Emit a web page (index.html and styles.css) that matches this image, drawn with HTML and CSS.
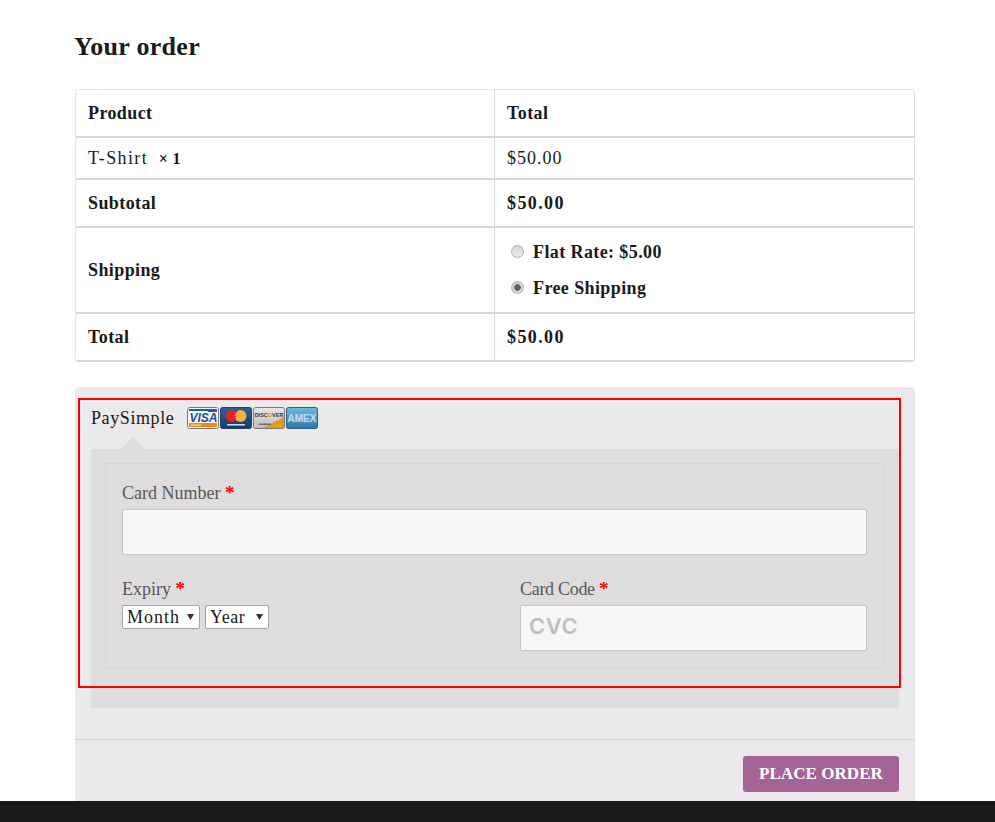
FILE: index.html
```html
<!DOCTYPE html>
<html lang="en">
<head>
<meta charset="utf-8">
<title>Your order</title>
<link rel="stylesheet" href="styles.css">
</head>
<body>
<div class="page">
  <main class="content">
    <h3 class="title">Your order</h3>
    <table class="order">
      <colgroup><col class="col-left"><col></colgroup>
      <thead>
        <tr class="row-head"><th>Product</th><th>Total</th></tr>
      </thead>
      <tbody>
        <tr class="row-item"><td><span class="item-name">T-Shirt</span> <strong class="qty">× 1</strong></td><td>$50.00</td></tr>
        <tr class="row-total"><th>Subtotal</th><th class="money">$50.00</th></tr>
        <tr class="row-ship">
          <th>Shipping</th>
          <th>
            <label class="ship-opt"><input type="radio" name="ship" class="radio">Flat Rate: $5.00</label>
            <label class="ship-opt"><input type="radio" name="ship" class="radio" checked>Free Shipping</label>
          </th>
        </tr>
        <tr class="row-total"><th>Total</th><th class="money">$50.00</th></tr>
      </tbody>
    </table>

    <section class="payment">
      <div class="highlight"></div>
      <div class="method">
        <span class="method-name">PaySimple</span>
        <span class="cards">
          <svg class="card" viewBox="0 0 32 22" width="32" height="22">
            <rect x=".5" y=".5" width="31" height="21" rx="2" fill="#f6f6f6" stroke="#77797d"/>
            <path d="M2 2H30V5H21V4H2Z" fill="#1c5fae"/>
            <text x="16.500" y="15" text-anchor="middle" class="visa">VISA</text>
            <rect x="2" y="16" width="28" height="4" fill="#ec8a14"/>
            <rect x="4" y="17.500" width="10" height="1.200" fill="#fbe3c0"/>
          </svg>
          <svg class="card" viewBox="0 0 32 22" width="32" height="22">
            <defs><linearGradient id="mc" x1="0" y1="0" x2="0" y2="1"><stop offset="0" stop-color="#2a6199"/><stop offset="1" stop-color="#153c69"/></linearGradient></defs>
            <rect x=".5" y=".5" width="31" height="21" rx="2" fill="url(#mc)" stroke="#28405f"/>
            <circle cx="11.500" cy="9" r="6" fill="#e2242b"/>
            <circle cx="20.500" cy="9" r="6" fill="#f2b33c"/>
            <path d="M13 5.500h4M13 7.500h3M13 9.500h3M13 11.500h3" stroke="#e2242b" stroke-width="1"/>
            <rect x="7" y="17" width="18" height="1.500" fill="#d4deea"/>
          </svg>
          <svg class="card" viewBox="0 0 32 22" width="32" height="22">
            <defs><linearGradient id="dc" x1="0" y1="0" x2="0" y2="1"><stop offset="0" stop-color="#e6e6e6"/><stop offset="1" stop-color="#bdbdbd"/></linearGradient></defs>
            <rect x=".5" y=".5" width="31" height="21" rx="2" fill="url(#dc)" stroke="#77797d"/>
            <path d="M10 21 L31 21 L31 10Z" fill="#e29d14"/>
            <text x="16" y="10" text-anchor="middle" class="disc">DISC<tspan class="disc-o">O</tspan>VER</text>
            <rect x="6" y="16.500" width="12" height="1.500" fill="#6f6f72"/>
          </svg>
          <svg class="card" viewBox="0 0 32 22" width="32" height="22">
            <defs><linearGradient id="ax" x1="0" y1="0" x2="0" y2="1"><stop offset="0" stop-color="#6bb8e2"/><stop offset="1" stop-color="#2f76a6"/></linearGradient></defs>
            <rect x=".5" y=".5" width="31" height="21" rx="2" fill="url(#ax)" stroke="#2b5f80"/>
            <text x="16" y="14.500" text-anchor="middle" class="amex">AMEX</text>
          </svg>
        </span>
      </div>
      <div class="panel">
        <fieldset class="fields">
          <div class="field">
            <label class="label">Card Number <span class="req">*</span></label>
            <input class="text-input" type="text">
          </div>
          <div class="field-row">
            <div class="col">
              <label class="label">Expiry <span class="req">*</span></label>
              <div class="selects">
                <select class="sel sel-month"><option>Month</option></select>
                <select class="sel sel-year"><option>Year</option></select>
              </div>
            </div>
            <div class="col col-code">
              <label class="label">Card Code <span class="req">*</span></label>
              <input class="text-input cvc" type="text" placeholder="CVC">
            </div>
          </div>
        </fieldset>
      </div>
      <div class="actions">
        <button class="place" type="button">Place order</button>
      </div>
    </section>
  </main>
  <footer class="bar"></footer>
</div>
</body>
</html>
```
FILE: styles.css
```css
* { box-sizing: border-box; }
html, body { margin: 0; height: 100%; }
body {
  background: #fff;
  color: #1a1a1a;
  font-family: "Liberation Serif", "Times New Roman", serif;
  font-size: 18px;
}
.page { height: 100vh; display: flex; flex-direction: column; overflow: hidden; }
.content { flex: 1; min-height: 0; overflow: hidden; padding: 0 80px 0 74px; }
.title { margin: 31px 0 0; font-size: 26px; line-height: 32px; font-weight: 700; letter-spacing: .3px; }

.order {
  width: 840px;
  margin: 26px 0 0 1px;
  table-layout: fixed;
  border-collapse: separate;
  border-spacing: 0;
  border: 1px solid #e6e6e6;
  border-right-color: #dcdcdc;
  border-bottom: 2px solid #d8d8d8;
  border-radius: 4px;
}
.col-left { width: 418px; }
.order th, .order td {
  padding: 0 12px;
  text-align: left;
  font-weight: 700;
  letter-spacing: .4px;
  border-left: 1px solid #d6d6d6;
  border-top: 2px solid #d8d8d8;
}
.order td { font-weight: 400; letter-spacing: 1px; }
.order th:first-child, .order td:first-child { border-left: 0; }
.order tr:first-child th { border-top: 0; }
.order .money { letter-spacing: 1.4px; }
.row-head { height: 46px; }
.row-item { height: 42px; }
.row-total { height: 48px; }
.row-ship { height: 86px; }
.item-name { letter-spacing: 1.4px; }
.qty { margin-left: 5px; letter-spacing: .4px; font-size: 16px; }

.ship-opt { display: flex; align-items: center; height: 36px; }
.radio {
  appearance: none;
  width: 13px;
  height: 13px;
  margin: 0 9px 2px 4px;
  border: 1px solid #aeaeae;
  border-radius: 50%;
  background: linear-gradient(#d4d4d4, #ececec);
}
.radio:checked {
  background: radial-gradient(circle, #626262 0 3px, #d6d6d6 3.5px);
}

.payment {
  position: relative;
  width: 840px;
  margin: 25px 0 0 1px;
  height: 440px;
  background: #ebe9eb;
  border-radius: 4px;
}
.highlight {
  position: absolute;
  left: 3px;
  top: 11px;
  width: 823px;
  height: 290px;
  border: 2px solid #f00;
  z-index: 2;
  pointer-events: none;
}
.method { display: flex; align-items: center; height: 62px; padding: 0 16px 0; }
.method-name { letter-spacing: .6px; }
.cards { display: flex; gap: 1px; margin-left: 13px; }
.card { display: block; }
.visa { font: italic 700 12px "Liberation Sans", sans-serif; fill: #1c4f9c; }
.disc { font: 700 5.500px "Liberation Sans", sans-serif; fill: #3a3a3a; }
.disc-o { fill: #e8911a; }
.amex { font: 700 10px "Liberation Sans", sans-serif; fill: #b4d7ee; stroke: #dcecf7; stroke-width: .2px; }

.panel {
  position: relative;
  margin: 0 16px;
  height: 259px;
  padding: 14px 15px 14px 14px;
  background: #dedcdd;
  border-radius: 2px;
}
.panel::before {
  content: "";
  position: absolute;
  left: 30px;
  top: -12px;
  border: 12px solid transparent;
  border-top: 0;
  border-bottom-color: #dedcdd;
}
.fields {
  margin: 0;
  min-width: 0;
  height: 205px;
  padding: 16px 16px 0;
  border: 1px solid #d5d3d4;
}
.label { display: block; height: 29px; line-height: 27px; color: #5b565b; }
.col-code .label { letter-spacing: -.3px; }
.req { color: #f00; font-weight: 700; font-size: 19px; line-height: 0; }
.text-input {
  display: block;
  width: 100%;
  height: 46px;
  margin: 0;
  padding: 0 8px;
  background: #f7f6f7;
  border: 1px solid #c7c1c6;
  border-radius: 2px;
  font: inherit;
}
.cvc::placeholder { font: 600 22px "Inter", sans-serif; letter-spacing: .6px; color: #c3bdc2; opacity: 1; }
.field-row { display: flex; margin-top: 21px; }
.col { width: 398px; }
.col-code { width: 347px; }
.selects { display: flex; gap: 5px; }
.sel {
  appearance: none;
  height: 24px;
  padding: 0 0 0 4px;
  color: #1a1a1a;
  border: 1px solid #a6a6a6;
  border-radius: 2px;
  font: 18px "Liberation Serif", serif;
  background: #fff url("data:image/svg+xml,%3Csvg xmlns='http://www.w3.org/2000/svg' width='8' height='6'%3E%3Cpath d='M0 0H7L3.500 6Z' fill='%23333'/%3E%3C/svg%3E") no-repeat right 4px center;
}
.sel-month { width: 78px; letter-spacing: 1px; }
.sel-year { width: 64px; letter-spacing: .5px; }

.actions {
  margin-top: 31px;
  padding: 16px 16px 0;
  border-top: 1px solid #d3ced2;
  display: flex;
  justify-content: flex-end;
}
.place {
  width: 156px;
  height: 36px;
  padding: 0;
  border: 0;
  border-radius: 3px;
  background: #a46497;
  color: #fff;
  font: 700 17px "Liberation Serif", serif;
  text-transform: uppercase;
  letter-spacing: .05px;
}
.bar { flex: none; height: 21px; background: #1a1a1a; }
```
